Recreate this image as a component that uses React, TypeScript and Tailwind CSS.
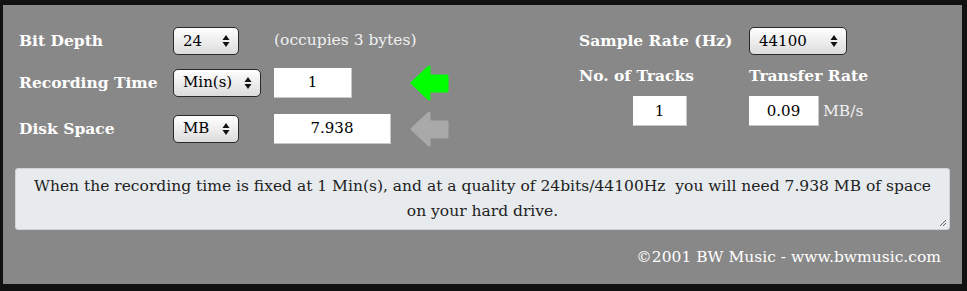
import type { ReactNode } from 'react';

const serif = "font-[family-name:'DejaVu_Serif','Liberation_Serif',serif]";

function Spinner() {
  return (
    <svg width="8" height="14" viewBox="0 0 8 14" className="pointer-events-none absolute right-[8px] top-1/2 -translate-y-1/2">
      <path d="M4 1 L7.5 6 L0.5 6 Z" fill="#111" />
      <path d="M4 13 L7.5 8 L0.5 8 Z" fill="#111" />
    </svg>
  );
}

function FakeSelect({ value, width }: { value: string; width: string }) {
  return (
    <div
      className={`relative flex h-[28px] items-center rounded-[5px] border border-[#2a2a2a] bg-gradient-to-b from-white to-[#dcdcdc] pl-[9px] text-[15px] text-black ${width}`}
    >
      {value}
      <Spinner />
    </div>
  );
}

function Field({ value, width }: { value: string; width: string }) {
  return (
    <div
      className={`flex h-[30px] items-center justify-center border-b border-r border-[#c8c8c8] bg-white text-[15px] text-black ${width}`}
    >
      {value}
    </div>
  );
}

function Arrow({ color }: { color: string }) {
  return (
    <svg width="39" height="36" viewBox="0 0 39 36">
      <path
        d="M2 18 L19 2 L19 11 L37 11 L37 26 L19 26 L19 34 Z"
        fill={color}
        stroke={color}
        strokeWidth="3"
        strokeLinejoin="round"
      />
    </svg>
  );
}

function Label({ children, className = '' }: { children: ReactNode; className?: string }) {
  return <span className={`text-[15.5px] font-bold text-white ${className}`}>{children}</span>;
}

export default function App() {
  return (
    <div className={`h-[291px] w-[967px] bg-[#111] pb-[7px] pl-[3px] pr-[5px] pt-[5px] ${serif}`}>
      <div className="relative flex h-full flex-col bg-[#888]">
        <div className="flex">
          {/* left block */}
          <div className="flex w-[560px] flex-col pl-[16px] pt-[22px]">
            <div className="flex h-[28px] items-center">
              <Label className="w-[154px]">Bit Depth</Label>
              <div className="w-[101px]">
                <FakeSelect value="24" width="w-[66px]" />
              </div>
              <span className="text-[15.5px] text-[#f0f0f0]">(occupies 3 bytes)</span>
            </div>
            <div className="mt-[12px] flex h-[31px] items-center">
              <Label className="w-[154px]">Recording Time</Label>
              <div className="w-[101px]">
                <FakeSelect value="Min(s)" width="w-[88px]" />
              </div>
              <div className="w-[136px]">
                <Field value="1" width="w-[78px]" />
              </div>
              <Arrow color="#00ff00" />
            </div>
            <div className="mt-[15px] flex h-[31px] items-center">
              <Label className="w-[154px]">Disk Space</Label>
              <div className="w-[101px]">
                <FakeSelect value="MB" width="w-[66px]" />
              </div>
              <div className="w-[136px]">
                <Field value="7.938" width="w-[117px]" />
              </div>
              <Arrow color="#a9a9a9" />
            </div>
          </div>
          {/* right block */}
          <div className="flex flex-col pl-[16px] pt-[22px]">
            <div className="flex h-[28px] items-center">
              <Label className="w-[170px]">Sample Rate (Hz)</Label>
              <FakeSelect value="44100" width="w-[98px]" />
            </div>
            <div className="mt-[9px] flex">
              <Label className="w-[170px]">No. of Tracks</Label>
              <Label>Transfer Rate</Label>
            </div>
            <div className="mt-[9px] flex items-center">
              <div className="w-[170px] pl-[54px]">
                <Field value="1" width="w-[54px]" />
              </div>
              <Field value="0.09" width="w-[70px]" />
              <span className="ml-[4px] text-[15.5px] text-[#f0f0f0]">MB/s</span>
            </div>
          </div>
        </div>

        <div className="relative mx-[12px] mt-[24px] flex h-[62px] items-center justify-center rounded-[3px] border border-[#cfd3d6] bg-[#e8ebee] px-[16px] text-center text-[15.5px] leading-[25px] text-[#222]">
          When the recording time is fixed at 1 Min(s), and at a quality of 24bits/44100Hz&nbsp; you will need 7.938 MB of space on your hard drive.
          <svg width="8" height="8" viewBox="0 0 8 8" className="absolute bottom-[2px] right-[2px]">
            <path d="M1 7 L7 1 M4 7 L7 4" stroke="#666" strokeWidth="1" />
          </svg>
        </div>

        <div className="mt-[16px] pr-[21px] text-right text-[15.5px] text-white">©2001 BW Music - www.bwmusic.com</div>
      </div>
    </div>
  );
}
